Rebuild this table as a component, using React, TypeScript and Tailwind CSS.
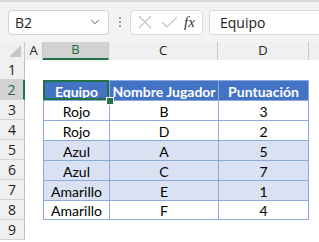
import { ChevronDown } from 'lucide-react'

type Row = { team: string; player: string; score: number }

const ROWS: Row[] = [
  { team: 'Rojo', player: 'B', score: 3 },
  { team: 'Rojo', player: 'D', score: 2 },
  { team: 'Azul', player: 'A', score: 5 },
  { team: 'Azul', player: 'C', score: 7 },
  { team: 'Amarillo', player: 'E', score: 1 },
  { team: 'Amarillo', player: 'F', score: 4 },
]

// banded rows: light blue on the middle four
const BANDED = [false, false, true, true, true, false]

const UI_FONT = { fontFamily: '"Open Sans", "Noto Sans", sans-serif' }
const CELL_FONT = { fontFamily: 'Lato, "Liberation Sans", sans-serif' }

function FormulaBar() {
  return (
    <div className="flex items-center h-[42px] bg-[#f3f3f3] border-t-2 border-[#d9d9d9] pl-2" style={UI_FONT}>
      <div className="flex items-center justify-between w-[101px] h-[25px] bg-white border border-[#d2d2d2] rounded-[4px] pl-[6px] pr-[6px] text-[14px] text-[#222]">
        <span>B2</span>
        <ChevronDown size={14} strokeWidth={1.6} className="text-[#555]" />
      </div>
      <div className="w-[21px] flex flex-col items-center gap-[2px]">
        <span className="w-[2px] h-[2px] bg-[#9a9a9a]" />
        <span className="w-[2px] h-[2px] bg-[#9a9a9a]" />
        <span className="w-[2px] h-[2px] bg-[#9a9a9a]" />
      </div>
      <div className="flex items-center w-[73px] h-[25px] bg-white border border-[#d9d9d9] rounded-[4px]">
        <svg width="26" height="24" viewBox="0 0 26 24" className="ml-[1px]">
          <path d="M7 6 L19 18 M19 6 L7 18" stroke="#c4c4c4" strokeWidth="1.2" fill="none" />
        </svg>
        <svg width="22" height="24" viewBox="0 0 22 24">
          <path d="M4 12 L9 17 L19 7" stroke="#c4c4c4" strokeWidth="1.2" fill="none" />
        </svg>
        <span className="ml-[4px] text-[15px] italic text-[#333]" style={{ fontFamily: '"Liberation Serif", serif' }}>
          fx
        </span>
      </div>
      <div className="flex items-center flex-1 h-[25px] ml-[6px] bg-white border border-r-0 border-[#d9d9d9] rounded-l-[4px] pl-[10px] text-[14px] text-[#222]">
        Equipo
      </div>
    </div>
  )
}

function ColHeader({ label, selected }: { label: string; selected?: boolean }) {
  return (
    <div
      className={`flex items-center justify-center border-r border-[#c8c8c8] text-[13px] ${
        selected ? 'bg-[#d2d2d2] text-[#1e6b3f] border-b-2 border-b-[#217346]' : 'bg-[#f0f0f0] text-[#222]'
      }`}
      style={UI_FONT}
    >
      {label}
    </div>
  )
}

function RowHeader({ n, selected }: { n: number; selected?: boolean }) {
  return (
    <div
      className={`flex items-center justify-center border-b border-[#d4d4d4] text-[14px] ${
        selected
          ? 'bg-[#d2d2d2] text-[#1e6b3f] border-r-2 border-r-[#217346]'
          : 'bg-[#f0f0f0] text-[#222] border-r border-r-[#bdbdbd]'
      }`}
      style={UI_FONT}
    >
      {n}
    </div>
  )
}

function Cell({ children, bg, last, header }: { children: React.ReactNode; bg: string; last?: boolean; header?: boolean }) {
  return (
    <div
      className={`flex items-center justify-center pt-[2px] border-l border-t border-[#8ea9db] text-[14px] leading-none ${bg} ${
        last ? 'border-r' : ''
      } ${header ? 'font-bold text-white' : 'text-black'}`}
      style={CELL_FONT}
    >
      {children}
    </div>
  )
}

export default function App() {
  return (
    <div className="w-[319px] h-[242px] overflow-hidden bg-white">
      <FormulaBar />
      <div className="grid grid-cols-[25px_18px_66px_109px_91px_1fr] grid-rows-[18px_repeat(9,20px)]">
        {/* corner */}
        <div className="relative bg-[#f0f0f0] border-r border-[#c8c8c8]">
          <div className="absolute right-[3px] bottom-[3px] w-0 h-0 border-l-[12px] border-l-transparent border-b-[12px] border-b-[#c6c6c6]" />
        </div>
        <ColHeader label="A" />
        <ColHeader label="B" selected />
        <ColHeader label="C" />
        <ColHeader label="D" />
        <div className="bg-[#f0f0f0]" />

        {/* row 1 */}
        <RowHeader n={1} />
        <div />
        <div />
        <div />
        <div />
        <div />

        {/* row 2: table header, B2 is the active cell */}
        <RowHeader n={2} selected />
        <div />
        <div className="relative grid">
          <Cell bg="bg-[#4472c4]" header>Equipo</Cell>
          <div className="absolute inset-0 border-2 border-[#217346]" />
          <div className="absolute -right-[4px] -bottom-[4px] w-[6px] h-[6px] bg-[#217346] outline outline-1 outline-white" />
        </div>
        <Cell bg="bg-[#4472c4]" header>Nombre Jugador</Cell>
        <Cell bg="bg-[#4472c4]" header last>Puntuación</Cell>
        <div />

        {ROWS.map((r, i) => {
          const bg = BANDED[i] ? 'bg-[#d9e1f2]' : 'bg-white'
          const bottom = i === ROWS.length - 1 ? 'border-b' : ''
          return [
            <RowHeader key={`h${i}`} n={i + 3} />,
            <div key={`a${i}`} />,
            <div key={`b${i}`} className={`grid border-[#8ea9db] ${bottom}`}>
              <Cell bg={bg}>{r.team}</Cell>
            </div>,
            <div key={`c${i}`} className={`grid border-[#8ea9db] ${bottom}`}>
              <Cell bg={bg}>{r.player}</Cell>
            </div>,
            <div key={`d${i}`} className={`grid border-[#8ea9db] ${bottom}`}>
              <Cell bg={bg} last>{r.score}</Cell>
            </div>,
            <div key={`e${i}`} />,
          ]
        })}

        {/* row 9 */}
        <RowHeader n={9} />
      </div>
    </div>
  )
}
